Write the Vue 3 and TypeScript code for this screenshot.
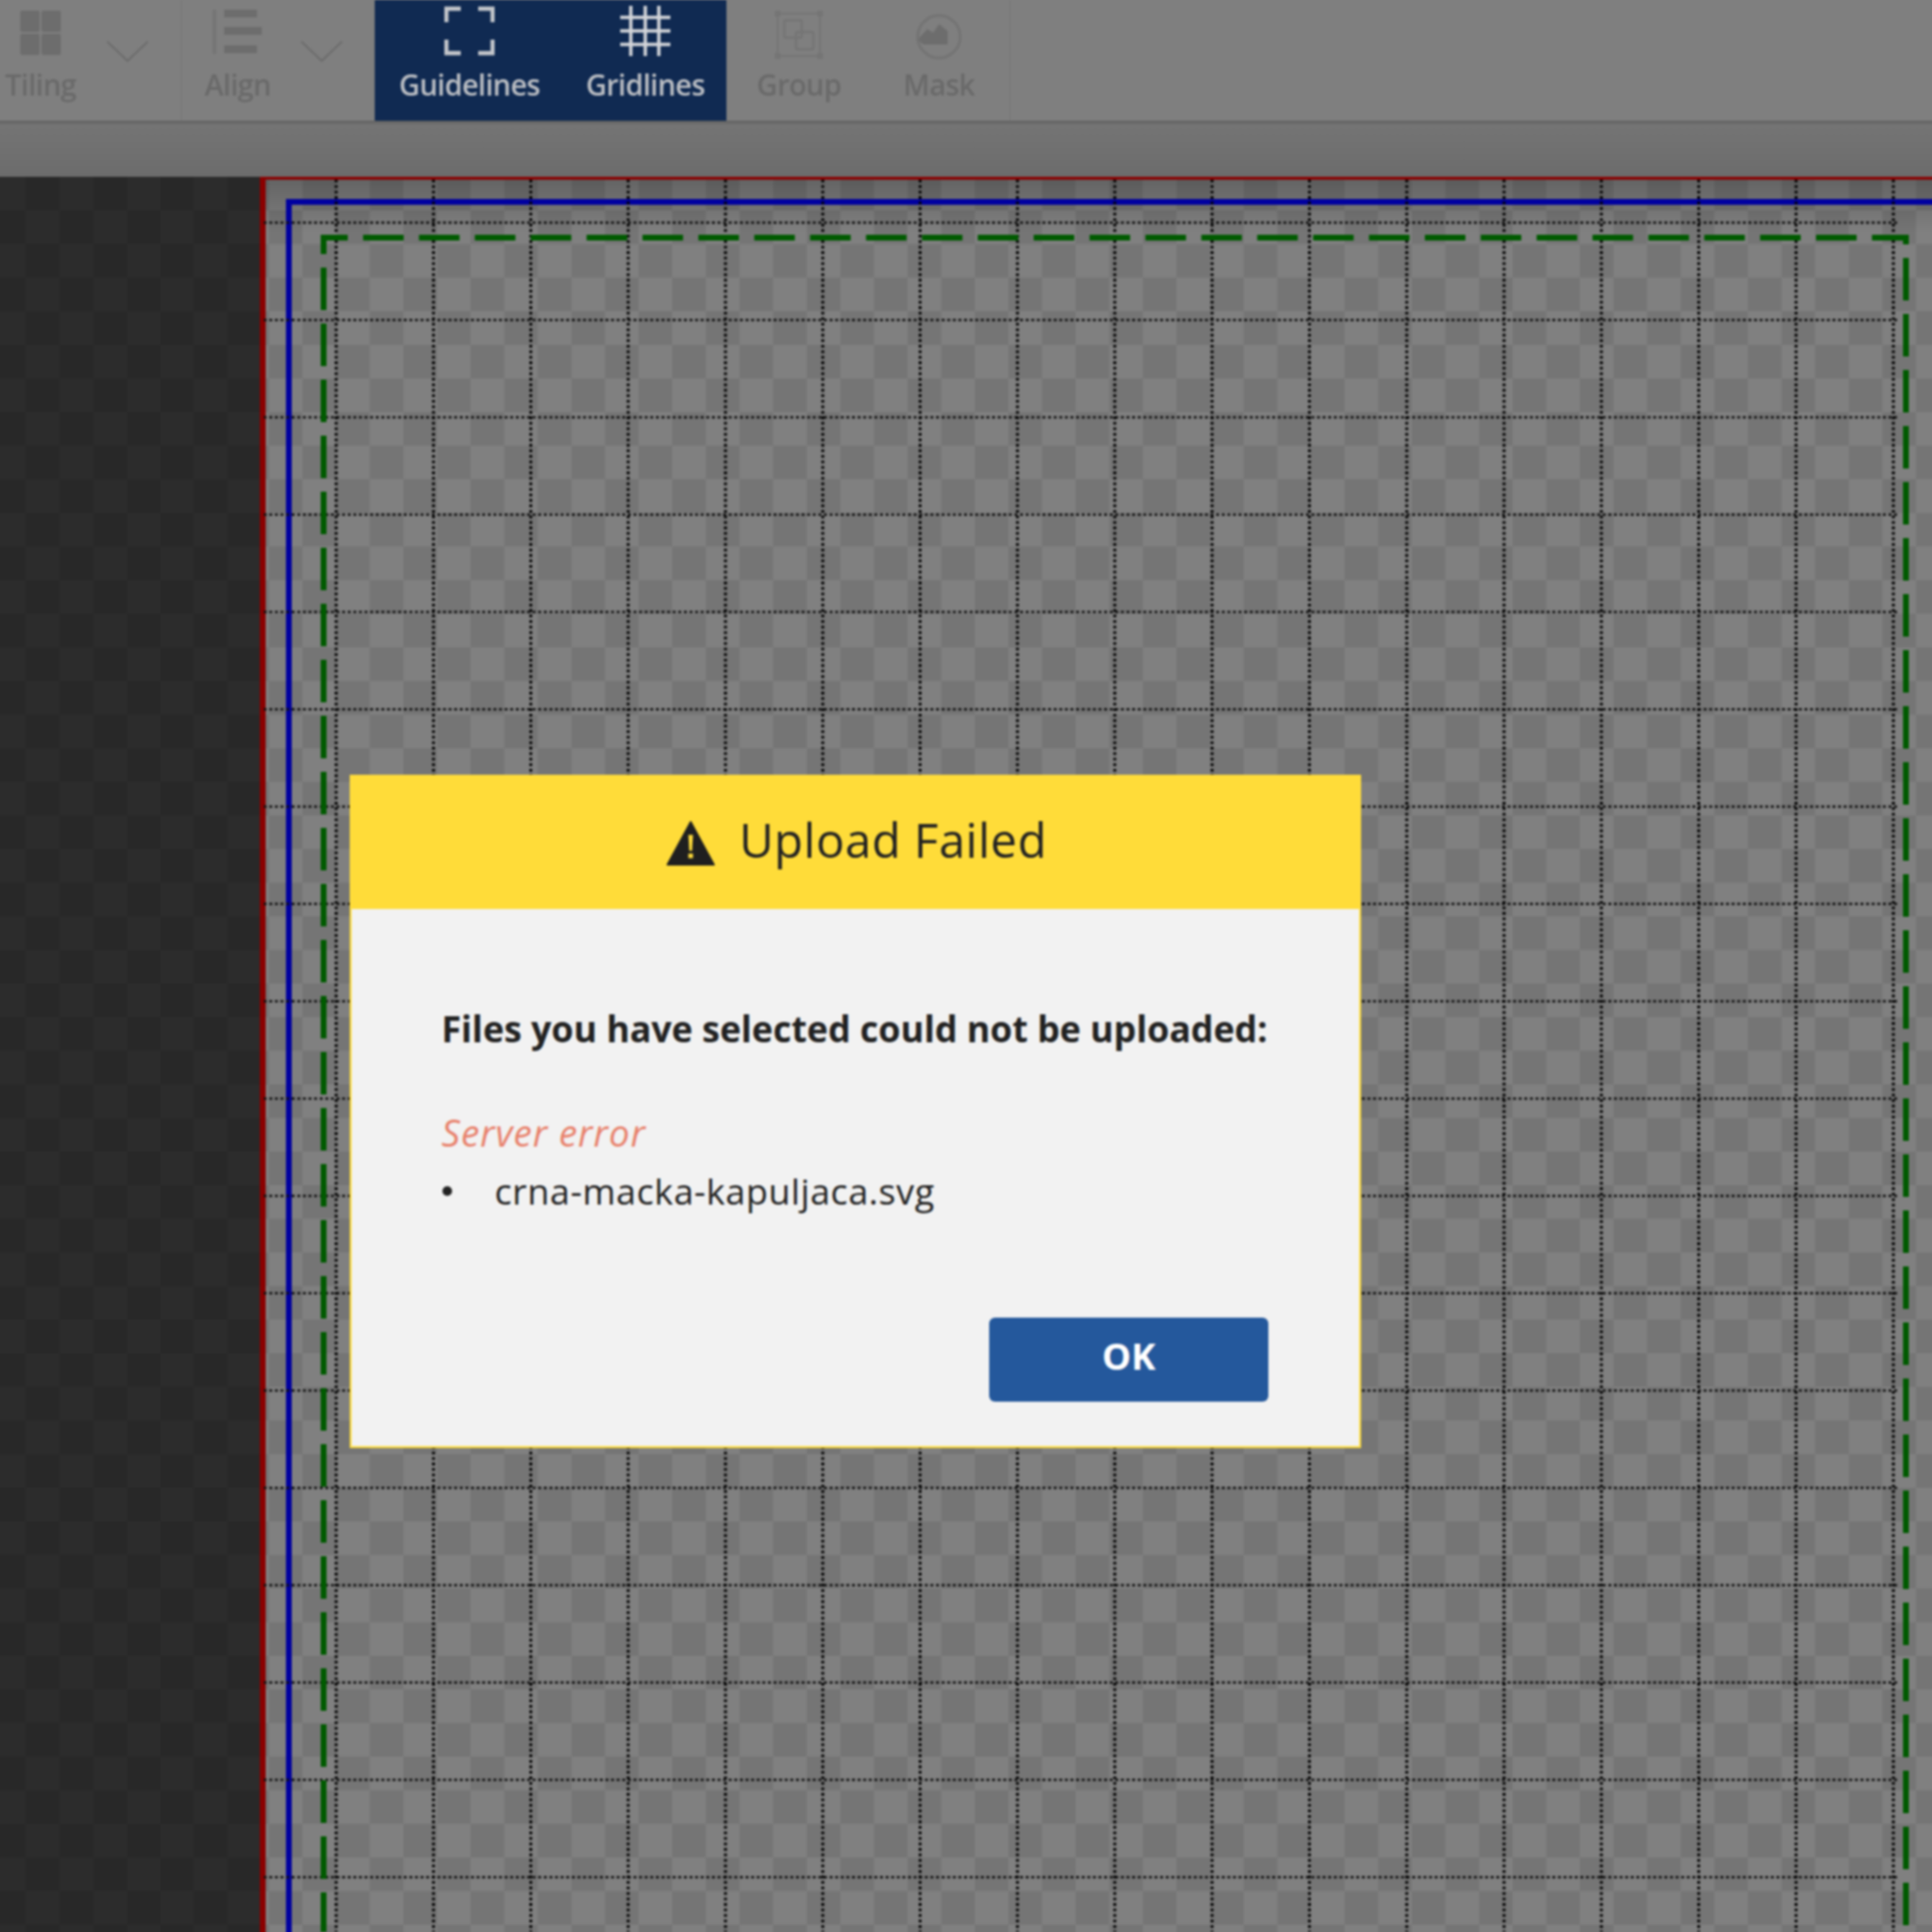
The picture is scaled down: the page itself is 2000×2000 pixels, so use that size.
<script setup lang="ts">
const gridStep = 100.75
const verticals = Array.from({ length: 17 }, (_, i) => 348 + i * gridStep)
const horizontals = Array.from({ length: 18 }, (_, i) => 47.5 + i * gridStep)
</script>

<template>
  <div class="app">
    <header class="toolbar">
      <div class="tool-group tool-group--tiling">
        <div class="tool tool--tiling">
          <svg class="tool-icon" width="46" height="46" viewBox="0 0 46 46">
            <rect x="2" y="0" width="20" height="22" rx="2" fill="#6d6d6d" />
            <rect x="24" y="0" width="20" height="22" rx="2" fill="#6d6d6d" />
            <rect x="2" y="24" width="20" height="22" rx="2" fill="#6d6d6d" />
            <rect x="24" y="24" width="20" height="22" rx="2" fill="#6d6d6d" />
          </svg>
          <span class="tool-label">Tiling</span>
        </div>
        <svg class="chevron" width="44" height="24" viewBox="0 0 44 24">
          <path d="M1 2 22 22 43 2" fill="none" stroke="#6d6d6d" stroke-width="2" />
        </svg>
      </div>

      <div class="tool-group tool-group--align">
        <div class="tool tool--align">
          <svg class="tool-icon" width="52" height="46" viewBox="0 0 52 46">
            <rect x="0" y="0" width="4" height="46" fill="#757575" />
            <rect x="12" y="0" width="34" height="8" fill="#6d6d6d" />
            <rect x="12" y="18" width="39" height="8" fill="#6d6d6d" />
            <rect x="12" y="37" width="34" height="8" fill="#6d6d6d" />
          </svg>
          <span class="tool-label">Align</span>
        </div>
        <svg class="chevron" width="44" height="24" viewBox="0 0 44 24">
          <path d="M1 2 22 22 43 2" fill="none" stroke="#6d6d6d" stroke-width="2" />
        </svg>
      </div>

      <div class="active-group">
        <div class="tool tool--guidelines">
          <svg class="tool-icon" width="52" height="52" viewBox="0 0 52 52">
            <path
              d="M2 17V3H17M35 3H50V17M2 35V49H17M50 35V49H35"
              fill="none"
              stroke="#c2c5ca"
              stroke-width="4.5"
            />
          </svg>
          <span class="tool-label tool-label--active">Guidelines</span>
        </div>
        <div class="tool tool--gridlines">
          <svg class="tool-icon" width="52" height="52" viewBox="0 0 52 52">
            <path
              d="M11 0V52M26 0V52M40 0V52M0 12H52M0 26H52M0 40H52"
              fill="none"
              stroke="#d2d5d9"
              stroke-width="3.5"
            />
          </svg>
          <span class="tool-label tool-label--active">Gridlines</span>
        </div>
      </div>

      <div class="tool tool--group">
        <svg class="tool-icon" width="52" height="52" viewBox="0 0 52 52">
          <rect x="4" y="4" width="44" height="44" fill="none" stroke="#757575" stroke-width="2" />
          <rect x="1" y="1" width="6" height="6" fill="#757575" />
          <rect x="45" y="1" width="6" height="6" fill="#757575" />
          <rect x="1" y="45" width="6" height="6" fill="#757575" />
          <rect x="45" y="45" width="6" height="6" fill="#757575" />
          <rect x="11" y="11" width="18" height="18" rx="2" fill="none" stroke="#757575" stroke-width="2.5" />
          <rect x="23" y="23" width="18" height="18" rx="2" fill="none" stroke="#757575" stroke-width="2.5" />
        </svg>
        <span class="tool-label">Group</span>
      </div>

      <div class="tool tool--mask">
        <svg class="tool-icon" width="48" height="48" viewBox="0 0 48 48">
          <circle cx="24" cy="24" r="22" fill="none" stroke="#747474" stroke-width="3" />
          <path
            d="M3 26 12 16 18 20 24 11 33 18V32H8C5 30 3 28 3 26Z"
            fill="#6d6d6d"
          />
        </svg>
        <span class="tool-label">Mask</span>
      </div>
    </header>

    <div class="subbar"></div>

    <main class="workspace">
      <div class="bleed">
        <div class="trim"></div>
      </div>

      <svg class="guides" width="2000" height="1817" viewBox="0 0 2000 1817">
        <line
          v-for="y in horizontals"
          :key="`h-${y}`"
          x1="273"
          :y1="y"
          x2="1964"
          :y2="y"
          class="guide-line"
        />
        <line
          v-for="x in verticals"
          :key="`v-${x}`"
          :x1="x"
          y1="3"
          :x2="x"
          y2="1817"
          class="guide-line guide-line--vertical"
        />
        <path d="M335 63H1973" class="safe-line" stroke-dasharray="42 15.85" stroke-dashoffset="17" />
        <path d="M335 60V1817" class="safe-line" stroke-dasharray="44 14" stroke-dashoffset="24" />
        <path d="M1973 60V1817" class="safe-line" stroke-dasharray="44 14" stroke-dashoffset="34" />
      </svg>
    </main>

    <section class="dialog">
      <header class="dialog-header">
        <svg width="50" height="48" viewBox="0 0 52 48">
          <path d="M26 1 51 47H1Z" fill="#1f1f1f" stroke="#1f1f1f" stroke-width="2" stroke-linejoin="round" />
          <path d="M23.5 15H28.5L27.5 32H24.5Z" fill="#ffdc39" />
          <rect x="23.5" y="35" width="5" height="5" fill="#ffdc39" />
        </svg>
        <h1 class="dialog-title">Upload Failed</h1>
      </header>
      <div class="dialog-body">
        <p class="dialog-message">Files you have selected could not be uploaded:</p>
        <p class="dialog-error">Server error</p>
        <ul class="file-list">
          <li>crna-macka-kapuljaca.svg</li>
        </ul>
        <div class="dialog-actions">
          <button class="ok-button" type="button">OK</button>
        </div>
      </div>
    </section>
  </div>
</template>

<style>
html,
body {
  margin: 0;
  overflow: hidden;
  background: #262626;
}
</style>

<style scoped>
.app {
  position: relative;
  width: 2000px;
  height: 2000px;
  display: flex;
  flex-direction: column;
  font-family: "Open Sans", "Liberation Sans", sans-serif;
  filter: blur(0.9px);
}

/* bars run 4px past the page edge so the blur doesn't fade them at the borders */
.toolbar {
  display: flex;
  flex-shrink: 0;
  box-sizing: border-box;
  height: 129px;
  margin: -4px -4px 0;
  padding: 4px 4px 0;
  background: #7f7f7f;
  box-shadow: 0 2px 3px rgba(0, 0, 0, 0.2);
  position: relative;
  z-index: 1;
}

.tool-group {
  display: flex;
  align-items: flex-start;
  box-sizing: border-box;
  border-right: 1px solid #767676;
}

.tool-group--tiling {
  width: 188px;
}

.tool-group--align {
  width: 200px;
}

.tool {
  display: flex;
  flex-direction: column;
  align-items: center;
}

.tool-icon {
  display: block;
}

.tool--tiling {
  width: 84px;
  padding-top: 11px;
}

.tool--align {
  width: 116px;
  padding-top: 10px;
}

.tool-group .chevron {
  margin-top: 41px;
}

.tool-group--tiling .chevron {
  margin-left: 26px;
}

.tool-group--align .chevron {
  margin-left: 7px;
}

.active-group {
  display: flex;
  width: 364px;
  background: #102a52;
}

.tool--guidelines {
  width: 196px;
  padding-top: 6px;
}

.tool--gridlines {
  width: 168px;
  padding-top: 6px;
}

.tool--group {
  width: 150px;
  padding-top: 10px;
}

.tool--mask {
  width: 144px;
  padding: 14px 3px 0 0;
  box-sizing: border-box;
  border-right: 1px solid #767676;
}

.tool-label {
  margin-top: 7px;
  font-size: 30px;
  line-height: 38px;
  font-weight: 600;
  letter-spacing: -0.7px;
  color: #6a6a6a;
}

.tool--tiling .tool-label {
  margin-top: 12px;
}

.tool--align .tool-label {
  margin-top: 13px;
}

.tool--guidelines .tool-label,
.tool--gridlines .tool-label {
  margin-top: 11px;
}

.tool-label--active {
  color: #bcbfc4;
}

.subbar {
  flex-shrink: 0;
  height: 58px;
  margin: 0 -4px;
  background: linear-gradient(#757575, #6c6c6c);
}

.workspace {
  position: relative;
  flex: 1;
  margin: 0 -4px -4px;
  padding-left: 273px;
  background: conic-gradient(#282828 25%, #2c2c2c 0 50%, #282828 0 75%, #2c2c2c 0) -4px 0 / 69.6px 69.6px;
}

.bleed {
  height: 100%;
  box-sizing: border-box;
  border-left: 6px solid #8a0000;
  border-top: 3px solid #8a0000;
  padding: 20px 0 0 21px;
  background:
    linear-gradient(rgba(0, 0, 0, 0.22), transparent 55px),
    conic-gradient(#757575 25%, #808080 0 50%, #757575 0 75%, #808080 0) -275px -3px / 69.6px 69.6px;
}

.trim {
  height: 100%;
  box-sizing: border-box;
  border-left: 6px solid #0000a0;
  border-top: 6px solid #0000a0;
}

.guides {
  position: absolute;
  left: 4px;
  top: 0;
}

.guide-line {
  stroke: #111;
  stroke-width: 2.5;
  stroke-dasharray: 3 2.8;
}

.guide-line--vertical {
  stroke: #000;
  stroke-width: 3;
  stroke-dasharray: 2.8 2.9;
}

.safe-line {
  fill: none;
  stroke: #005a00;
  stroke-width: 6;
}

.dialog {
  position: absolute;
  left: 362px;
  top: 802px;
  width: 1047px;
  height: 697px;
  display: flex;
  flex-direction: column;
  box-sizing: border-box;
  border: 2px solid #ffdc39;
  background: #f2f2f2;
  color: #222;
}

.dialog-header {
  display: flex;
  align-items: center;
  justify-content: center;
  gap: 25px;
  height: 137px;
  padding-left: 3px;
  flex-shrink: 0;
  background: #ffdc39;
}

.dialog-title {
  margin: -8px 0 0;
  font-size: 49px;
  font-weight: 400;
  letter-spacing: 0.5px;
}

.dialog-body {
  display: flex;
  flex-direction: column;
  flex: 1;
  padding: 99px 94px 46px 93px;
}

.dialog-message {
  margin: 0;
  font-size: 37px;
  line-height: 50px;
  font-weight: 700;
  white-space: nowrap;
}

.dialog-error {
  margin: 57px 0 0;
  font-size: 38px;
  line-height: 50px;
  font-style: italic;
  letter-spacing: 1px;
  color: #e8806a;
}

.file-list {
  margin: 11px 0 0;
  padding: 0;
  list-style: none;
  font-size: 37px;
  line-height: 50px;
  letter-spacing: 0.6px;
}

.file-list li {
  display: flex;
  align-items: center;
  gap: 44px;
}

.file-list li::before {
  content: "";
  width: 10px;
  height: 10px;
  margin-left: 1px;
  border-radius: 50%;
  background: #222;
}

.dialog-actions {
  display: flex;
  justify-content: flex-end;
  margin-top: auto;
}

.ok-button {
  width: 289px;
  height: 87px;
  padding: 0 0 9px;
  border: none;
  border-radius: 6px;
  background: #24589c;
  color: #fff;
  font-family: inherit;
  font-size: 38px;
  font-weight: 700;
}
</style>
